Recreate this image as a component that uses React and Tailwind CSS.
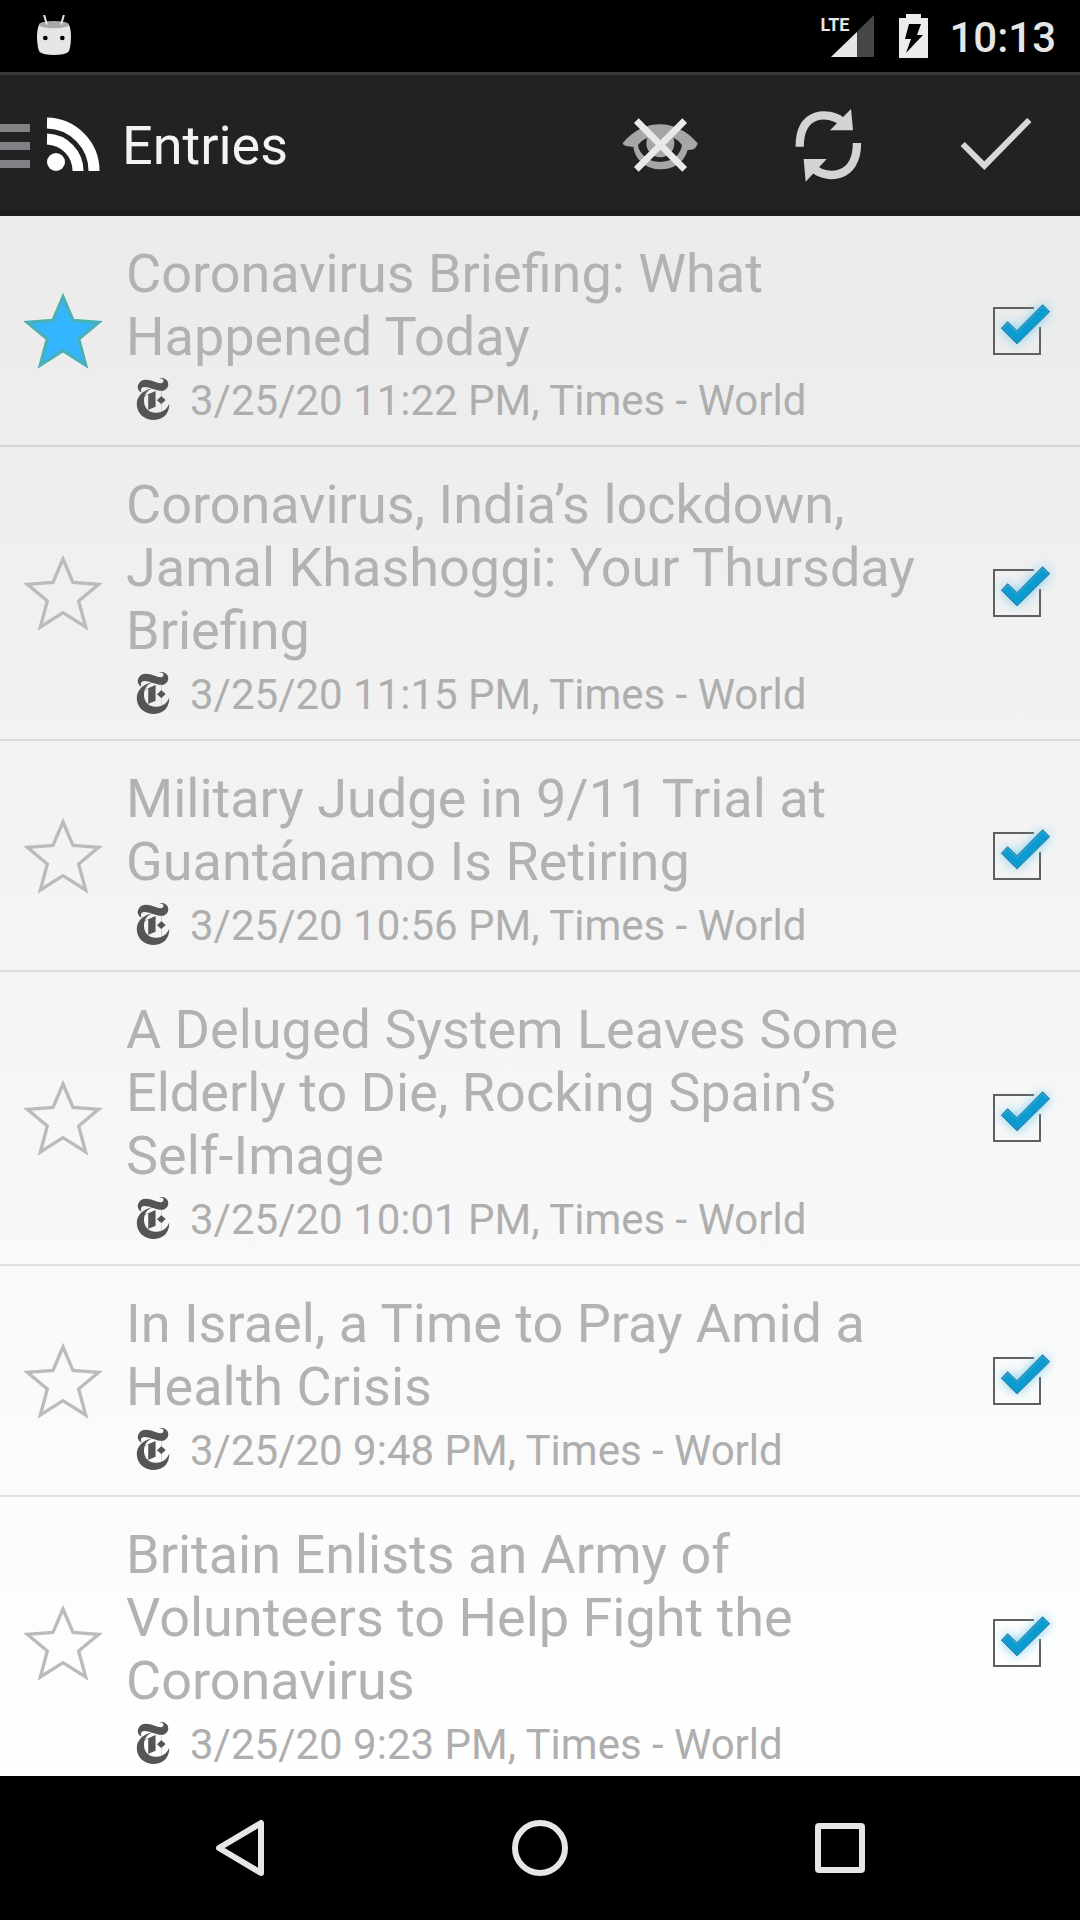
import { useState } from "react";
import { SiNewyorktimes } from "react-icons/si";

const ENTRIES = [
  { title: "Coronavirus Briefing: What Happened Today", meta: "3/25/20 11:22 PM, Times - World", starred: true },
  { title: "Coronavirus, India’s lockdown, Jamal Khashoggi: Your Thursday Briefing", meta: "3/25/20 11:15 PM, Times - World" },
  { title: "Military Judge in 9/11 Trial at Guantánamo Is Retiring", meta: "3/25/20 10:56 PM, Times - World" },
  { title: "A Deluged System Leaves Some Elderly to Die, Rocking Spain’s Self-Image", meta: "3/25/20 10:01 PM, Times - World" },
  { title: "In Israel, a Time to Pray Amid a Health Crisis", meta: "3/25/20 9:48 PM, Times - World" },
  { title: "Britain Enlists an Army of Volunteers to Help Fight the Coronavirus", meta: "3/25/20 9:23 PM, Times - World" },
];

function StatusBar() {
  return (
    <div className="flex h-[72px] shrink-0 items-center justify-between bg-black pr-6 pl-9">
      <svg className="h-[42px] w-9" viewBox="0 0 108 126" aria-hidden="true">
        <path d="M10 27Q3 41 3 67Q4 101 11 111Q22 120 54 120Q86 120 97 111Q104 101 105 67Q105 41 98 27Z" fill="#e6e6e6" />
        <ellipse cx="54" cy="29" rx="45" ry="11" fill="#a9a9a9" />
        <path d="M25 2l7 24M83 2l-7 24" stroke="#e6e6e6" strokeWidth="6" strokeLinecap="round" />
        <circle cx="28" cy="69" r="7" fill="#000" />
        <circle cx="79" cy="69" r="7" fill="#000" />
      </svg>
      <div className="flex items-center">
        <div className="relative h-[42px] w-[54px]">
          <svg className="h-full w-full" viewBox="0 0 54 42" aria-hidden="true">
            <path d="M11 42L54 0V42Z" fill="#464646" />
            <path d="M11 42L37 17V42Z" fill="#e6e6e6" />
          </svg>
          <span className="absolute top-0 left-0 font-['Liberation_Sans_Narrow','Roboto',sans-serif] text-[18px] leading-[20px] font-bold text-[#e6e6e6]">LTE</span>
        </div>
        <svg className="ml-6 h-[44px] w-[30px]" viewBox="0 0 30 44" aria-hidden="true">
          <path d="M1 4h7V0h15v4h7v40H1Z" fill="#ececec" />
          <path d="M11 10h12l-4 11h6L8 39l5-14H7Z" fill="#000" />
        </svg>
        <span className="ml-[21px] pt-1 text-[42px] leading-[50px] font-medium text-[#e6e6e6]">10:13</span>
      </div>
    </div>
  );
}

function ActionButton({ label, children }) {
  return (
    <button type="button" aria-label={label} className="flex h-full w-[168px] items-center justify-center">
      {children}
    </button>
  );
}

function ActionBar() {
  return (
    <header className="flex h-[144px] shrink-0 items-center border-t-[3px] border-b-[6px] border-t-[#3a3a3a] border-b-[#1b1b1b] bg-[#222222] pt-[6px]">
      <button type="button" aria-label="Open navigation" className="h-full shrink-0">
        <svg className="h-[60px] w-[102px]" viewBox="0 0 102 60" aria-hidden="true">
          <path d="M0 8h30v8H0zM0 26h30v8H0zM0 44h30v8H0z" fill="#808285" />
          <circle cx="56" cy="46" r="9" fill="#fff" />
          <path d="M47 23A32 32 0 0 1 78 55M47 7A48 48 0 0 1 94 55" fill="none" stroke="#fff" strokeWidth="11" />
        </svg>
      </button>
      <h1 className="ml-5 flex-1 text-[54px] leading-[63px] text-[#f3f3f3]">Entries</h1>
      <ActionButton label="Hide read entries">
        <svg className="h-[60px] w-20" viewBox="0 10 240 180" aria-hidden="true">
          <path fillRule="evenodd" d="M8 92C40 52 80 35 120 35s82 20 113 57c-4 16-14 21-30 20-12 40-44 58-82 58s-76-26-81-68c-18 1-30-3-32-10ZM82 76c-12 4-20 10-28 22 4 28 32 50 66 50s62-20 66-50c-8-12-14-18-26-22Z" fill="#a6a6a6" />
          <circle cx="121" cy="92" r="42" fill="#a6a6a6" />
          <path d="M49 24L194 170M194 24L49 170" stroke="#e9e9e9" strokeWidth="20" />
        </svg>
      </ActionButton>
      <ActionButton label="Refresh">
        <svg className="h-[74px] w-[68px]" viewBox="0 2 204 222" aria-hidden="true">
          <path d="M17 115C17 5 105 10 142 38" fill="none" stroke="#d4d4d4" strokeWidth="25" />
          <path d="M171 2L177 66H108Z" fill="#d4d4d4" />
          <path d="M189 104C189 214 97 212 62 183" fill="none" stroke="#d4d4d4" strokeWidth="25" />
          <path d="M35 220L29 152H98Z" fill="#d4d4d4" />
        </svg>
      </ActionButton>
      <ActionButton label="Mark all as read">
        <svg className="h-[56px] w-[72px]" viewBox="0 4 216 168" aria-hidden="true">
          <path d="M8 82L73 147L208 10" fill="none" stroke="#d8d8d8" strokeWidth="18" />
        </svg>
      </ActionButton>
    </header>
  );
}

function Entry({ title, meta, starred }) {
  const [star, setStar] = useState(Boolean(starred));
  const [read, setRead] = useState(true);
  return (
    <li className="flex shrink-0 items-center border-b-2 border-black/10">
      <button type="button" aria-label="Star entry" aria-pressed={star} onClick={() => setStar(!star)} className="shrink-0">
        <svg className="h-[78px] w-[126px]" viewBox="0 0 378 234" aria-hidden="true">
          <path
            d="M189 15L219 85L296 91L236 141L257 219L189 176L121 219L142 141L82 91L159 85Z"
            fill={star ? "#33b5ff" : "none"}
            stroke={star ? "#4ab0b8" : "#bbbbbb"}
            strokeWidth="10"
          />
        </svg>
      </button>
      <div className="flex-1 pt-[26px] pr-5 pb-[19px]">
        <h2 className="text-[54px] leading-[63px] text-[#b2b2b2]">{title}</h2>
        <div className="mt-2 flex items-center gap-4 pl-[6px] text-[#aeaeae]">
          <SiNewyorktimes className="mb-1 h-[42px] w-[42px] text-[#555555]" aria-hidden="true" />
          <p className="text-[42px] leading-[50px]">{meta}</p>
        </div>
      </div>
      <label className="relative h-[100px] w-[120px] shrink-0">
        <input
          type="checkbox"
          aria-label={"Read: " + title}
          checked={read}
          onChange={() => setRead(!read)}
          className="absolute inset-0 h-full w-full appearance-none"
        />
        <svg className="pointer-events-none relative h-full w-full" viewBox="0 0 360 300" aria-hidden="true">
          {read ? (
            <>
              <path d="M222 81H102V219H240V138" fill="none" stroke="#5f5f5f" strokeWidth="6" />
              <path
                className="drop-shadow-[0_0_16px_#6fcdf2]"
                d="M124 142L143 122L171 149L248 71L269 92L171 189Z"
                fill="#0c9bd0"
              />
              <path d="M124 142L143 122L171 149L248 71L269 92L171 189Z" fill="#0c9bd0" stroke="#4c7f95" strokeWidth="3" />
              <path d="M130 142L143 128L171 155L248 77L263 92" fill="none" stroke="#36aeda" strokeWidth="3" />
            </>
          ) : (
            <path d="M102 81H240V219H102Z" fill="none" stroke="#5f5f5f" strokeWidth="6" />
          )}
        </svg>
      </label>
    </li>
  );
}

function NavigationBar() {
  return (
    <nav className="flex h-[144px] shrink-0 items-center justify-around bg-black px-[90px]">
      <button type="button" aria-label="Back" className="flex h-full flex-1 items-center justify-center">
        <svg className="h-[60px] w-[50px]" viewBox="0 0 50 60" aria-hidden="true">
          <path d="M46 5V55L4 30Z" fill="none" stroke="#e6e6e6" strokeWidth="6" strokeLinejoin="round" />
        </svg>
      </button>
      <button type="button" aria-label="Home" className="flex h-full flex-1 items-center justify-center">
        <span className="size-14 rounded-full border-[6px] border-[#e6e6e6]" />
      </button>
      <button type="button" aria-label="Recent apps" className="flex h-full flex-1 items-center justify-center">
        <span className="size-[50px] rounded-[4px] border-[6px] border-[#e6e6e6]" />
      </button>
    </nav>
  );
}

export default function App() {
  return (
    <div className="flex h-screen flex-col overflow-hidden bg-black font-['Roboto',sans-serif]">
      <StatusBar />
      <ActionBar />
      <main className="min-h-0 flex-1 overflow-hidden bg-linear-to-b from-[#ebebeb] to-white">
        <ul className="flex flex-col">
          {ENTRIES.map((entry) => (
            <Entry key={entry.title} {...entry} />
          ))}
        </ul>
      </main>
      <NavigationBar />
    </div>
  );
}
